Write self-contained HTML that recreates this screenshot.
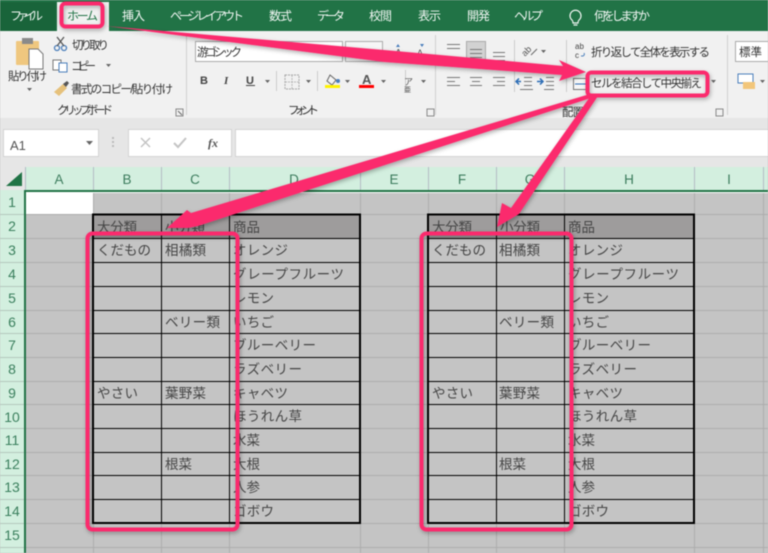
<!DOCTYPE html>
<html lang="ja"><head><meta charset="utf-8"><title>Excel</title>
<style>
html,body{margin:0;padding:0;background:#c4c4c4;width:768px;height:553px;overflow:hidden}
svg{display:block;filter:blur(.4px)}
text{font-family:"Liberation Sans","Noto Sans CJK JP",sans-serif}
.tab{font-size:12px;fill:#f2f7f4}
.rb{font-size:11.5px;fill:#333}
.cell{font-size:13.5px;fill:#454545}
.col{font-size:13.5px;fill:#3b7b5c;text-anchor:middle}
.row{font-size:14px;fill:#3a7f5d;text-anchor:middle}
</style></head><body>
<svg width="768" height="553" viewBox="0 0 768 553" xmlns="http://www.w3.org/2000/svg">
<defs><filter id="sh" x="-10%" y="-10%" width="120%" height="125%"><feDropShadow dx="1" dy="2" stdDeviation="2" flood-color="#000" flood-opacity=".3"/></filter></defs>
<!-- title/tabs -->
<rect width="768" height="31" fill="#217346"/>
<rect x="0" y="2" width="56" height="29" fill="#19643a"/>
<rect x="57" y="2" width="52" height="29" fill="#f1f1f1"/>
<rect y="31" width="768" height="87" fill="#f1f1f1"/>
<rect y="118" width="768" height="49" fill="#e6e6e6"/>
<g class="tab">
<text x="10" y="20" textLength="33">ファイル</text>
<text x="122" y="20" textLength="23">挿入</text>
<text x="170" y="20" textLength="74">ページ レイアウト</text>
<text x="269" y="20" textLength="23">数式</text>
<text x="317" y="20" textLength="28">データ</text>
<text x="369" y="20" textLength="23">校閲</text>
<text x="418" y="20" textLength="23">表示</text>
<text x="467" y="20" textLength="23">開発</text>
<text x="514" y="20" textLength="29">ヘルプ</text>
<text x="594" y="20" textLength="56">何をしますか</text>
</g>
<text x="67" y="20" textLength="31" style="font-size:12px;fill:#217346">ホーム</text>
<g fill="none" stroke="#f2f7f4" stroke-width="1.2"><path d="M572 20a5.5 5.5 0 1 1 7 0c-1 1-1 2-1 3h-5c0-1 0-2-1-3z"/><path d="M573.500 25h4"/></g>
<!-- clipboard group -->
<rect x="16" y="41" width="23" height="24" rx="1" fill="#efc77f"/>
<rect x="22" y="38" width="11" height="6" fill="#8a8a8a"/>
<path d="M29 49h9l5 5v15H29z" fill="#fff" stroke="#777"/>
<text x="8" y="80" textLength="39" class="rb">貼り付け</text>
<path d="M27 88h5l-2.500 3z" fill="#666"/>
<g fill="none" stroke="#4a7ebb" stroke-width="1.300"><circle cx="57" cy="48" r="2.500"/><circle cx="64" cy="48" r="2.500"/></g>
<path d="M57 37l7 9M64 37l-7 9" stroke="#555" stroke-width="1.300"/>
<text x="72" y="49" textLength="37" class="rb">切り取り</text>
<rect x="53" y="60" width="8" height="10" fill="#fff" stroke="#777"/><rect x="59" y="63" width="8" height="9" fill="#fff" stroke="#4a7ebb"/>
<text x="71" y="70" textLength="25" class="rb">コピー</text>
<path d="M106 64h5l-2.500 3z" fill="#666"/>
<path d="M54 92l9-8 4 4-8 8z" fill="#e6c17b"/><path d="M63 84l4-3 2 2-3 4z" fill="#555"/>
<text x="71" y="93" textLength="102" class="rb">書式のコピー/貼り付け</text>
<text x="57" y="114" textLength="56" class="rb">クリップボード</text>
<path d="M176 109h7v7h-7z" fill="none" stroke="#888"/><path d="M178 111l4 4" stroke="#666"/>
<rect x="186" y="35" width="1" height="80" fill="#d0d0d0"/>
<!-- font -->
<rect x="195.500" y="41.500" width="147" height="20" fill="#fff" stroke="#ababab"/>
<text x="197" y="56" textLength="45" class="rb">游ゴシック</text>
<rect x="345.500" y="41.500" width="37" height="20" fill="#f6f6f6" stroke="#ababab"/>
<text x="395" y="56" style="font-size:10px;fill:#555">A</text>
<text x="417" y="56" style="font-size:9px;fill:#555">A</text>
<path d="M396 47l2-3 2 3z" fill="#4a7ebb"/><path d="M420 44l4 0-2 3z" fill="#4a7ebb"/>
<text x="200" y="84" style="font-size:11px;font-weight:bold;fill:#444">B</text>
<text x="224" y="84" style="font-size:11px;font-style:italic;font-family:'Liberation Serif',serif;font-weight:bold;fill:#444">I</text>
<text x="246" y="84" style="font-size:11px;font-weight:bold;fill:#444">U</text>
<rect x="246" y="85" width="9" height="1" fill="#444"/>
<path d="M265 80h5l-2.500 3z M306 80h5l-2.500 3z M345 80h5l-2.500 3z M381 80h5l-2.500 3z" fill="#666"/>
<rect x="276" y="71" width="1" height="20" fill="#ccc"/>
<rect x="317" y="71" width="1" height="20" fill="#ccc"/>
<rect x="285" y="75" width="14" height="14" fill="none" stroke="#a5a5a5" stroke-dasharray="2 1"/><path d="M292 75v14M285 82h14" stroke="#b5b5b5" stroke-dasharray="2 1"/>
<path d="M330 75l6 5-4 5-5-4z" fill="#f4f4f4" stroke="#666"/><circle cx="338" cy="81" r="2" fill="#4a7ebb"/>
<rect x="325" y="85" width="15" height="3" fill="#fff200"/>
<text x="362" y="84" style="font-size:13px;font-weight:bold;fill:#555">A</text>
<rect x="359" y="85" width="15" height="3" fill="#ff0000"/>
<text x="288" y="114" textLength="31" class="rb">フォント</text>
<rect x="405" y="70" width="1" height="22" fill="#ccc"/>
<text x="404" y="85" style="font-size:9px;fill:#555">ア</text>
<text x="404" y="92" textLength="9" style="font-size:7px;fill:#555">亜</text>
<path d="M421 80h5l-2.500 3z" fill="#666"/>
<path d="M427 109h7v7h-7z" fill="none" stroke="#888"/>
<rect x="435" y="35" width="1" height="80" fill="#d0d0d0"/>
<!-- alignment -->
<rect x="466.500" y="41.500" width="19" height="20" fill="#d2d2d2" stroke="#aaa"/>
<g stroke="#777" stroke-width="1" fill="none">
<path d="M447 44.500h13M447 48.500h13M470 49.500h12M470 53.500h12M470 57.500h12M493 52.500h12M493 56.500h12M493 60.500h12"/>
<path d="M447 77.500h13M447 81.500h8M447 85.500h13M470 77.500h12M472 81.500h8M470 85.500h12M493 77.500h12M497 81.500h8M493 85.500h12"/>
<path d="M524 77.500h8M524 81.500h8M524 85.500h8M546 77.500h8M546 81.500h8M546 85.500h8M520 89.500h13M544 89.500h10"/>
</g>
<path d="M521 81.500h-4m2-3l-3 3 3 3" fill="none" stroke="#2b6cb5" stroke-width="1.500"/>
<path d="M537 81.500h6m-3-3l3 3-3 3" fill="none" stroke="#2b6cb5" stroke-width="1.500"/>
<text x="523" y="56" transform="rotate(-45 525 54)" style="font-size:9px;fill:#555">ab</text>
<path d="M531 55l6-6" stroke="#666"/>
<path d="M541 50h5l-2.500 3z" fill="#666"/>
<rect x="514" y="40" width="1" height="52" fill="#ccc"/>
<rect x="566" y="40" width="1" height="52" fill="#ccc"/>
<text x="575" y="49" style="font-size:8px;fill:#444">ab</text>
<text x="575" y="58" style="font-size:8px;fill:#444">c</text>
<path d="M581 56h2a2 2 0 0 0 1-3" fill="none" stroke="#4a7ebb"/>
<text x="591" y="56" textLength="119" class="rb">折り返して全体を表示する</text>
<rect x="573.500" y="78.500" width="14" height="11" fill="#f6f6f6" stroke="#777"/><path d="M575 84h11" stroke="#2b6cb5"/>
<text x="591" y="87" textLength="111" class="rb">セルを結合して中央揃え</text>
<path d="M711 80h5l-2.500 3z" fill="#666"/>
<text x="562" y="116" textLength="22" class="rb">配置</text>
<path d="M716 109h7v7h-7z" fill="none" stroke="#888"/>
<rect x="727" y="35" width="1" height="80" fill="#d0d0d0"/>
<rect x="735.500" y="41.500" width="40" height="20" fill="#fff" stroke="#ababab"/>
<text x="739" y="56" textLength="23" class="rb">標準</text>
<rect x="738" y="74" width="15" height="9" fill="#fff" stroke="#4a7ebb"/><rect x="743" y="82" width="12" height="7" fill="#f2c67a"/>
<path d="M760 80h5l-2.500 3z" fill="#666"/>
<!-- formula bar -->
<rect x="3.500" y="129.500" width="95" height="27" fill="#fff" stroke="#d4d4d4"/>
<text x="10" y="150" style="font-size:13px;fill:#555">A1</text>
<path d="M86 141h7l-3.500 4z" fill="#666"/>
<path d="M113 137v12" stroke="#bbb" stroke-width="2" stroke-dasharray="2 2"/>
<rect x="128.500" y="129.500" width="103" height="27" fill="#fff" stroke="#d4d4d4"/>
<rect x="235.500" y="129.500" width="540" height="27" fill="#fff" stroke="#d4d4d4"/>
<path d="M141 138l9 9M150 138l-9 9" stroke="#c4c4c4" stroke-width="1.500"/>
<path d="M174 143l4 4 8-9" fill="none" stroke="#c4c4c4" stroke-width="2"/>
<text x="208" y="147" style="font-size:12px;font-style:italic;font-family:'Liberation Serif',serif;font-weight:bold;fill:#555">fx</text>
<!-- grid base -->
<rect y="167" width="768" height="386" fill="#c4c4c4"/>
<rect y="167" width="768" height="23" fill="#d3efdf"/>
<rect y="190" width="25" height="363" fill="#d3efdf"/>
<rect y="167" width="25" height="23" fill="#e6e6e6"/>
<path d="M22 172v14H6z" fill="#217346"/>
<g stroke="#aab" stroke-opacity=".75" stroke-width="1">
<path d="M25.500 167v23M93.500 167v23M161.500 167v23M229.500 167v23M360.500 167v23M428.500 167v23M496.500 167v23M564.500 167v23M694.500 167v23M763.500 167v23"/>
</g>
<g stroke="#adadad" stroke-width="1">
<path d="M93.500 190v363M161.500 190v363M229.500 190v363M360.500 190v363M428.500 190v363M496.500 190v363M564.500 190v363M694.500 190v363M763.500 190v363"/>
<path d="M26 214.500h742M26 238.500h742M26 262.500h742M26 286.500h742M26 310.500h742M26 333.500h742M26 357.500h742M26 381.500h742M26 404.500h742M26 428.500h742M26 452.500h742M26 475.500h742M26 499.500h742M26 523.500h742M26 547.500h742"/>
</g>
<g stroke="#b4c8bd" stroke-width="1">
<path d="M0 214.500h25M0 238.500h25M0 262.500h25M0 286.500h25M0 310.500h25M0 333.500h25M0 357.500h25M0 381.500h25M0 404.500h25M0 428.500h25M0 452.500h25M0 475.500h25M0 499.500h25M0 523.500h25M0 547.500h25"/>
</g>
<rect x="26" y="192" width="67" height="22" fill="#fff"/>
<rect x="25" y="190" width="743" height="2" fill="#217346"/>
<rect x="24" y="190" width="2" height="363" fill="#217346"/>
<rect x="26" y="192" width="742" height="1" fill="#fff"/>
<g class="col">
<text x="59" y="184">A</text><text x="127" y="184">B</text><text x="195" y="184">C</text><text x="294" y="184">D</text><text x="394" y="184">E</text><text x="462" y="184">F</text><text x="530" y="184">G</text><text x="629" y="184">H</text><text x="729" y="184">I</text>
</g>
<g class="row">
<text x="12" y="207">1</text><text x="12" y="231">2</text><text x="12" y="255">3</text><text x="12" y="279">4</text><text x="12" y="303">5</text><text x="12" y="327">6</text><text x="12" y="350">7</text><text x="12" y="374">8</text><text x="12" y="398">9</text><text x="12" y="422">10</text><text x="12" y="445">11</text><text x="12" y="469">12</text><text x="12" y="492">13</text><text x="12" y="516">14</text><text x="12" y="540">15</text>
</g>
<!-- table 1 -->
<rect x="93" y="215" width="267" height="24" fill="#9e9c9c"/>
<g fill="none" stroke="#000" stroke-width="1">
<path d="M93 238.500h267M93 262.500h267M93 286.500h267M93 310.500h267M93 333.500h267M93 357.500h267M93 381.500h267M93 404.500h267M93 428.500h267M93 452.500h267M93 475.500h267M93 499.500h267M161.500 214v309M229.500 214v309"/>
<rect x="93" y="214.500" width="267" height="308.500" stroke-width="2"/>
</g>
<!-- table 2 -->
<rect x="428" y="215" width="266" height="24" fill="#9e9c9c"/>
<g fill="none" stroke="#000" stroke-width="1">
<path d="M428 238.500h266M428 262.500h266M428 286.500h266M428 310.500h266M428 333.500h266M428 357.500h266M428 381.500h266M428 404.500h266M428 428.500h266M428 452.500h266M428 475.500h266M428 499.500h266M496.500 214v309M564.500 214v309"/>
<rect x="428" y="214.500" width="266" height="308.500" stroke-width="2"/>
</g>
<g class="cell">
<text x="97" y="232" textLength="40">大分類</text><text x="165" y="232" textLength="40">小分類</text><text x="233" y="232" textLength="27">商品</text>
<text x="97" y="255" textLength="54">くだもの</text><text x="165" y="255" textLength="41">相橘類</text><text x="233" y="255" textLength="55">オレンジ</text>
<text x="233" y="279" textLength="111">グレープフルーツ</text>
<text x="233" y="303" textLength="41">レモン</text>
<text x="165" y="327" textLength="55">ベリー類</text><text x="233" y="327" textLength="41">いちご</text>
<text x="233" y="350" textLength="83">ブルーベリー</text>
<text x="233" y="374" textLength="69">ラズベリー</text>
<text x="97" y="398" textLength="41">やさい</text><text x="165" y="398" textLength="41">葉野菜</text><text x="233" y="398" textLength="55">キャベツ</text>
<text x="233" y="421" textLength="69">ほうれん草</text>
<text x="233" y="445" textLength="27">水菜</text>
<text x="165" y="469" textLength="27">根菜</text><text x="233" y="469" textLength="27">大根</text>
<text x="233" y="492" textLength="27">人参</text>
<text x="233" y="516" textLength="41">ゴボウ</text>
<text x="432" y="232" textLength="40">大分類</text><text x="500" y="232" textLength="40">小分類</text><text x="568" y="232" textLength="27">商品</text>
<text x="432" y="255" textLength="54">くだもの</text><text x="499" y="255" textLength="41">相橘類</text><text x="568" y="255" textLength="55">オレンジ</text>
<text x="568" y="279" textLength="111">グレープフルーツ</text>
<text x="568" y="303" textLength="41">レモン</text>
<text x="499" y="327" textLength="55">ベリー類</text><text x="568" y="327" textLength="41">いちご</text>
<text x="568" y="350" textLength="83">ブルーベリー</text>
<text x="568" y="374" textLength="69">ラズベリー</text>
<text x="432" y="398" textLength="41">やさい</text><text x="499" y="398" textLength="41">葉野菜</text><text x="568" y="398" textLength="55">キャベツ</text>
<text x="568" y="421" textLength="69">ほうれん草</text>
<text x="568" y="445" textLength="27">水菜</text>
<text x="499" y="469" textLength="27">根菜</text><text x="568" y="469" textLength="27">大根</text>
<text x="568" y="492" textLength="27">人参</text>
<text x="568" y="516" textLength="41">ゴボウ</text>
</g>
<!-- annotations -->
<g filter="url(#sh)">
<g fill="#fb2c6d">
<path d="M106 26L384 50 563 66 559 60 586 72 559 81 562 75 384 62z"/>
<path d="M590 94L597 96 198 226 188 228 167 228 187 210 191 213z"/>
<path d="M592 94L598 96 519 214 497 227 502 203 511 208z"/>
</g>
<g fill="none" stroke="#fb2c6d" stroke-width="4">
<rect x="61.500" y="3.500" width="41" height="23" rx="4"/>
<rect x="587.500" y="72.500" width="120" height="23" rx="4"/>
<rect x="87.500" y="233.500" width="150" height="296" rx="5"/>
<rect x="421.500" y="233.500" width="150" height="296" rx="5"/>
</g>
</g>
</svg>
</body></html>
